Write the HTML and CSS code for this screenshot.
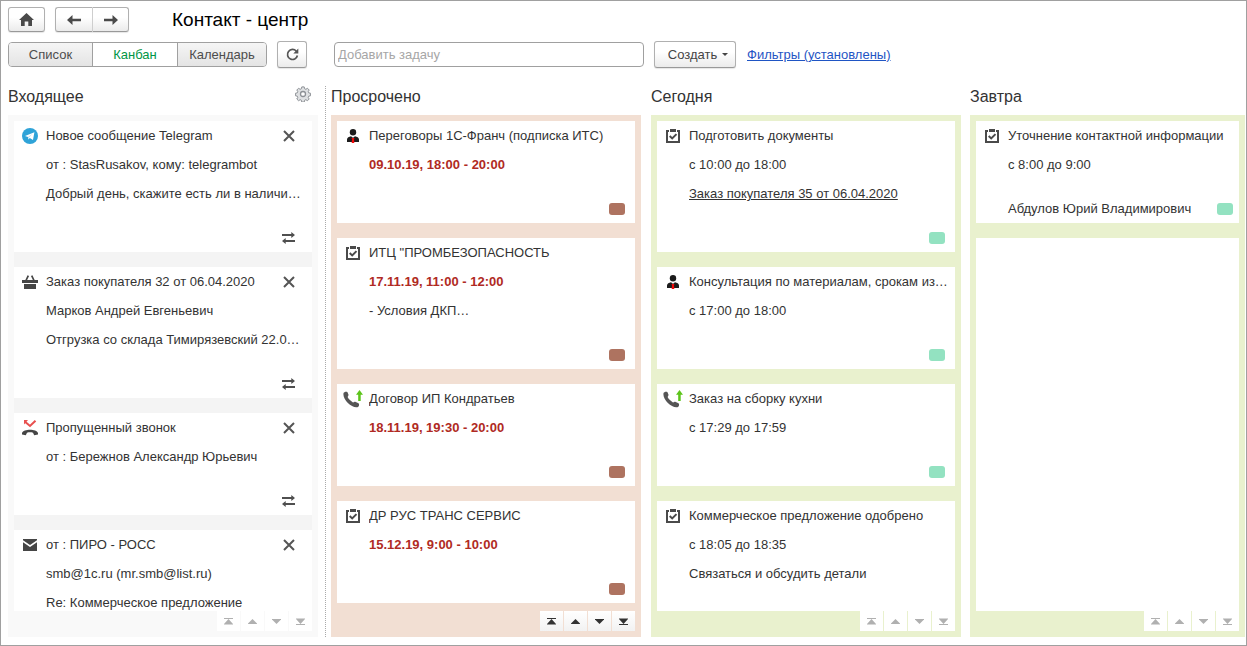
FILE: index.html
```html
<!DOCTYPE html>
<html lang="ru">
<head>
    <meta charset="UTF-8">
    <meta name="viewport" content="width=device-width, initial-scale=1.0">
    <title>Контакт - центр</title>
    <link rel="stylesheet" href="styles.css">
</head>
<body>
    <svg class="sprite" aria-hidden="true">
        <symbol id="i-home" viewBox="0 0 15 13">
            <path d="M7.500 0 15 7h-2v6H9.300V8.500H5.700V13H2V7H0z" fill="#4a4a4a"/>
        </symbol>
        <symbol id="i-left" viewBox="0 0 14 10">
            <path d="M0 5 5.500 0v3.700H14v2.600H5.500V10z" fill="#4a4a4a"/>
        </symbol>
        <symbol id="i-right" viewBox="0 0 14 10">
            <path d="M14 5 8.500 0v3.700H0v2.600h8.500V10z" fill="#4a4a4a"/>
        </symbol>
        <symbol id="i-refresh" viewBox="0 0 13 13">
            <path d="M10.300 3.200A5 5 0 1 0 11.400 7.500" fill="none" stroke="#555" stroke-width="1.700"/>
            <path d="M12.300.600v5H7.300z" fill="#555"/>
        </symbol>
        <symbol id="i-gear" viewBox="0 0 16 16">
            <g stroke="#8d9196" fill="#dfe1e3">
                <path d="M6.800.900h2.400l.500 1.900 1.100.500 1.700-1 1.700 1.700-1 1.700.500 1.100 1.900.500v2.400l-1.900.500-.500 1.100 1 1.700-1.700 1.700-1.700-1-1.100.500-.500 1.900H6.800l-.500-1.900-1.100-.500-1.700 1L1.800 13l1-1.700-.500-1.100-1.900-.500V7.300l1.900-.500.500-1.100-1-1.700 1.700-1.700 1.700 1 1.100-.500z" stroke-linejoin="round"/>
                <circle cx="8" cy="8" r="2.500" fill="#fff" stroke-width="1.300"/>
            </g>
        </symbol>
        <symbol id="i-telegram" viewBox="0 0 16 16">
            <circle cx="8" cy="8" r="8" fill="#2fa3d8"/>
            <path d="M3 8 12.400 4.200 11 12 7.800 9.900 6.400 11.500 6 9z" fill="#fff"/>
            <path d="M6 9l4.600-3.200L7 9.400l-.600 2.100z" fill="#b9dcef"/>
        </symbol>
        <symbol id="i-basket" viewBox="0 0 16 14">
            <path d="M4 5.500 6.300.700M12 5.500 9.700.700" stroke="#454545" stroke-width="1.700" fill="none"/>
            <path d="M0 5h16v3H0zM2 9h12v5H2z" fill="#454545"/>
        </symbol>
        <symbol id="i-missed" viewBox="0 0 16 16">
            <path d="M3 1.700 8 6l5.500-5.300" stroke="#e8504f" stroke-width="2" fill="none"/>
            <path d="M2 0h4L2 4.500z" fill="#e8504f"/>
            <path d="M0 13C1.500 8.600 14.500 8.600 16 13v1.500l-3.800.800-1.200-2.500c-1.700-.600-4.300-.600-6 0l-1.200 2.500-3.800-.800z" fill="#454545"/>
        </symbol>
        <symbol id="i-mail" viewBox="0 0 14 12">
            <path d="M0 0h14v1.300L7 6 0 1.300z" fill="#454545"/>
            <path d="M0 3.200 7 8l7-4.800V12H0z" fill="#454545"/>
        </symbol>
        <symbol id="i-person" viewBox="0 0 12 14">
            <ellipse cx="6" cy="3.300" rx="3.200" ry="3.300" fill="#1c1c1c"/>
            <path d="M0 13v-2.500C0 8.800 2 7.700 4 7.300l2 1.500 2-1.500c2 .400 4 1.500 4 3.200V13z" fill="#1c1c1c"/>
            <path d="M4.500 9h3l-.500 1.200.300 3.800H4.700l.300-3.800z" fill="#f00808"/>
        </symbol>
        <symbol id="i-task" viewBox="0 0 14 14">
            <path d="M3 2H1v11h12V2h-2" fill="none" stroke="#4a4a4a" stroke-width="2"/>
            <path d="M4 0h6v3H4z" fill="#4a4a4a"/>
            <path d="M3.700 7 6.200 9.400l4.300-4.300" fill="none" stroke="#4a4a4a" stroke-width="2"/>
        </symbol>
        <symbol id="i-call" viewBox="0 0 20 18">
            <path d="M.500 3.200C1 1.800 3.500 1.200 4.500 2.200l1 2.600c.100 1-.900 1.500-.900 2.300 1.200 2.300 3.200 4.200 5.400 5.300.800.100 1.200-.600 2.200-.600l3.300 1.400c1 .800.800 3.400-1 4C9 18.500-.700 9.800.500 3.200z" fill="#555"/>
            <path d="M16.500 0 20 4.700h-2.300V11h-2.500V4.700H13z" fill="#5cc41a"/>
        </symbol>
        <symbol id="i-close" viewBox="0 0 12 12">
            <path d="M1 1l10 10M11 1 1 11" stroke="#555" stroke-width="2" fill="none"/>
        </symbol>
        <symbol id="i-swap" viewBox="0 0 13 12">
            <path d="M0 3h10M3 9h10" stroke="#4f4f4f" stroke-width="2" fill="none"/>
            <path d="M9.300 0 13 3 9.300 6zM3.700 6 0 9l3.700 3z" fill="#4f4f4f"/>
        </symbol>
        <symbol id="i-top" viewBox="0 0 9 7">
            <path d="M0 0h9v1H0zM4.500 1 9 6v.500H0V6z" fill="currentColor"/>
        </symbol>
        <symbol id="i-up" viewBox="0 0 9 7">
            <path d="M4.500 1 9 5.500V6H0v-.500z" fill="currentColor"/>
        </symbol>
        <symbol id="i-down" viewBox="0 0 9 7">
            <path d="M4.500 6 9 1.500V1H0v.500z" fill="currentColor"/>
        </symbol>
        <symbol id="i-bottom" viewBox="0 0 9 7">
            <path d="M0 6h9v1H0zM4.500 6 9 1V.500H0V1z" fill="currentColor"/>
        </symbol>
    </svg>

    <header class="header">
        <button class="btn home" aria-label="Домой"><svg width="15" height="13"><use href="#i-home"/></svg></button>
        <div class="nav">
            <button class="btn" aria-label="Назад"><svg width="14" height="10"><use href="#i-left"/></svg></button>
            <button class="btn" aria-label="Вперед"><svg width="14" height="10"><use href="#i-right"/></svg></button>
        </div>
        <h1>Контакт - центр</h1>
    </header>

    <div class="toolbar">
        <div class="views">
            <button>Список</button>
            <button class="active">Канбан</button>
            <button>Календарь</button>
        </div>
        <button class="btn refresh" aria-label="Обновить"><svg width="13" height="13"><use href="#i-refresh"/></svg></button>
        <input class="add-task" type="text" placeholder="Добавить задачу" aria-label="Добавить задачу">
        <button class="btn create">Создать <span class="caret"></span></button>
        <a class="filters" href="#">Фильтры (установлены)</a>
    </div>

    <main class="board">
        <section class="column inbox">
            <div class="column-title">
                <h2>Входящее</h2>
                <button class="icon-btn" aria-label="Настройка"><svg width="16" height="16"><use href="#i-gear"/></svg></button>
            </div>
            <div class="lane">
                <div class="cards">
                    <article class="card">
                        <div class="row">
                            <span class="icon"><svg width="16" height="16"><use href="#i-telegram"/></svg></span>
                            <h3>Новое сообщение Telegram</h3>
                            <button class="icon-btn" aria-label="Закрыть"><svg width="12" height="12"><use href="#i-close"/></svg></button>
                        </div>
                        <p>от : StasRusakov, кому: telegrambot</p>
                        <p>Добрый день, скажите есть ли в наличи…</p>
                        <div class="card-foot">
                            <button class="icon-btn" aria-label="Передать"><svg width="13" height="12"><use href="#i-swap"/></svg></button>
                        </div>
                    </article>
                    <article class="card">
                        <div class="row">
                            <span class="icon"><svg width="16" height="14"><use href="#i-basket"/></svg></span>
                            <h3>Заказ покупателя 32 от 06.04.2020</h3>
                            <button class="icon-btn" aria-label="Закрыть"><svg width="12" height="12"><use href="#i-close"/></svg></button>
                        </div>
                        <p>Марков Андрей Евгеньевич</p>
                        <p>Отгрузка со склада Тимирязевский 22.0…</p>
                        <div class="card-foot">
                            <button class="icon-btn" aria-label="Передать"><svg width="13" height="12"><use href="#i-swap"/></svg></button>
                        </div>
                    </article>
                    <article class="card">
                        <div class="row">
                            <span class="icon"><svg width="16" height="16"><use href="#i-missed"/></svg></span>
                            <h3>Пропущенный звонок</h3>
                            <button class="icon-btn" aria-label="Закрыть"><svg width="12" height="12"><use href="#i-close"/></svg></button>
                        </div>
                        <p>от : Бережнов Александр Юрьевич</p>
                        <div class="card-foot">
                            <button class="icon-btn" aria-label="Передать"><svg width="13" height="12"><use href="#i-swap"/></svg></button>
                        </div>
                    </article>
                    <article class="card">
                        <div class="row">
                            <span class="icon"><svg width="14" height="12"><use href="#i-mail"/></svg></span>
                            <h3>от : ПИРО - РОСС</h3>
                            <button class="icon-btn" aria-label="Закрыть"><svg width="12" height="12"><use href="#i-close"/></svg></button>
                        </div>
                        <p>smb@1c.ru (mr.smb@list.ru)</p>
                        <p>Re: Коммерческое предложение</p>
                        <div class="card-foot"></div>
                    </article>
                </div>
                <div class="pager">
                    <button disabled aria-label="В начало"><svg width="9" height="7"><use href="#i-top"/></svg></button>
                    <button disabled aria-label="Вверх"><svg width="9" height="7"><use href="#i-up"/></svg></button>
                    <button disabled aria-label="Вниз"><svg width="9" height="7"><use href="#i-down"/></svg></button>
                    <button disabled aria-label="В конец"><svg width="9" height="7"><use href="#i-bottom"/></svg></button>
                </div>
            </div>
        </section>

        <section class="column overdue">
            <div class="column-title">
                <h2>Просрочено</h2>
            </div>
            <div class="lane">
                <div class="cards">
                    <article class="card">
                        <div class="row">
                            <span class="icon"><svg width="12" height="14"><use href="#i-person"/></svg></span>
                            <h3>Переговоры 1С-Франч (подписка ИТС)</h3>
                        </div>
                        <p class="late">09.10.19, 18:00 - 20:00</p>
                        <div class="card-foot"><span class="mark"></span></div>
                    </article>
                    <article class="card">
                        <div class="row">
                            <span class="icon"><svg width="14" height="14"><use href="#i-task"/></svg></span>
                            <h3>ИТЦ "ПРОМБЕЗОПАСНОСТЬ</h3>
                        </div>
                        <p class="late">17.11.19, 11:00 - 12:00</p>
                        <p>- Условия ДКП…</p>
                        <div class="card-foot"><span class="mark"></span></div>
                    </article>
                    <article class="card">
                        <div class="row">
                            <span class="icon"><svg width="20" height="18"><use href="#i-call"/></svg></span>
                            <h3>Договор ИП Кондратьев</h3>
                        </div>
                        <p class="late">18.11.19, 19:30 - 20:00</p>
                        <div class="card-foot"><span class="mark"></span></div>
                    </article>
                    <article class="card">
                        <div class="row">
                            <span class="icon"><svg width="14" height="14"><use href="#i-task"/></svg></span>
                            <h3>ДР РУС ТРАНС СЕРВИС</h3>
                        </div>
                        <p class="late">15.12.19, 9:00 - 10:00</p>
                        <div class="card-foot"><span class="mark"></span></div>
                    </article>
                </div>
                <div class="pager">
                    <button aria-label="В начало"><svg width="9" height="7"><use href="#i-top"/></svg></button>
                    <button aria-label="Вверх"><svg width="9" height="7"><use href="#i-up"/></svg></button>
                    <button aria-label="Вниз"><svg width="9" height="7"><use href="#i-down"/></svg></button>
                    <button aria-label="В конец"><svg width="9" height="7"><use href="#i-bottom"/></svg></button>
                </div>
            </div>
        </section>

        <section class="column today">
            <div class="column-title">
                <h2>Сегодня</h2>
            </div>
            <div class="lane">
                <div class="cards">
                    <article class="card">
                        <div class="row">
                            <span class="icon"><svg width="14" height="14"><use href="#i-task"/></svg></span>
                            <h3>Подготовить документы</h3>
                        </div>
                        <p>с 10:00 до 18:00</p>
                        <p><a href="#">Заказ покупателя 35 от 06.04.2020</a></p>
                        <div class="card-foot"><span class="mark"></span></div>
                    </article>
                    <article class="card">
                        <div class="row">
                            <span class="icon"><svg width="12" height="14"><use href="#i-person"/></svg></span>
                            <h3>Консультация по материалам, срокам из…</h3>
                        </div>
                        <p>с 17:00 до 18:00</p>
                        <div class="card-foot"><span class="mark"></span></div>
                    </article>
                    <article class="card">
                        <div class="row">
                            <span class="icon"><svg width="20" height="18"><use href="#i-call"/></svg></span>
                            <h3>Заказ на сборку кухни</h3>
                        </div>
                        <p>с 17:29 до 17:59</p>
                        <div class="card-foot"><span class="mark"></span></div>
                    </article>
                    <article class="card">
                        <div class="row">
                            <span class="icon"><svg width="14" height="14"><use href="#i-task"/></svg></span>
                            <h3>Коммерческое предложение одобрено</h3>
                        </div>
                        <p>с 18:05 до 18:35</p>
                        <p>Связаться и обсудить детали</p>
                        <div class="card-foot"></div>
                    </article>
                </div>
                <div class="pager">
                    <button disabled aria-label="В начало"><svg width="9" height="7"><use href="#i-top"/></svg></button>
                    <button disabled aria-label="Вверх"><svg width="9" height="7"><use href="#i-up"/></svg></button>
                    <button disabled aria-label="Вниз"><svg width="9" height="7"><use href="#i-down"/></svg></button>
                    <button disabled aria-label="В конец"><svg width="9" height="7"><use href="#i-bottom"/></svg></button>
                </div>
            </div>
        </section>

        <section class="column tomorrow">
            <div class="column-title">
                <h2>Завтра</h2>
            </div>
            <div class="lane">
                <div class="cards">
                    <article class="card">
                        <div class="row">
                            <span class="icon"><svg width="14" height="14"><use href="#i-task"/></svg></span>
                            <h3>Уточнение контактной информации</h3>
                        </div>
                        <p>с 8:00 до 9:00</p>
                        <div class="card-foot"><span class="person">Абдулов Юрий Владимирович</span><span class="mark"></span></div>
                    </article>
                    <div class="card empty"></div>
                </div>
                <div class="pager">
                    <button disabled aria-label="В начало"><svg width="9" height="7"><use href="#i-top"/></svg></button>
                    <button disabled aria-label="Вверх"><svg width="9" height="7"><use href="#i-up"/></svg></button>
                    <button disabled aria-label="Вниз"><svg width="9" height="7"><use href="#i-down"/></svg></button>
                    <button disabled aria-label="В конец"><svg width="9" height="7"><use href="#i-bottom"/></svg></button>
                </div>
            </div>
        </section>
    </main>
</body>
</html>
```
FILE: styles.css
```css
* {
    margin: 0;
    padding: 0;
    box-sizing: border-box;
}

body {
    display: flex;
    flex-direction: column;
    height: 100vh;
    padding: 6px 1px 8px 7px;
    border: 1px solid #a0a0a0;
    background: #fff;
    color: #333;
    font-family: "Liberation Sans", Arial, sans-serif;
    font-size: 13px;
}

button,
input {
    font: inherit;
    color: inherit;
}

button {
    cursor: pointer;
}

svg {
    display: block;
}

.sprite {
    position: absolute;
    width: 0;
    height: 0;
}

/* header */

.header {
    display: flex;
    align-items: center;
    height: 25px;
}

.header h1 {
    margin-left: 43px;
    color: #000;
    font-size: 19px;
    font-weight: normal;
}

.btn {
    display: flex;
    justify-content: center;
    align-items: center;
    width: 37px;
    height: 25px;
    border: 1px solid #b0b0b0;
    border-bottom-color: #999;
    border-radius: 3px;
    background: linear-gradient(#fff 40%, #ebebeb);
    box-shadow: 0 1px 1px rgba(0, 0, 0, 0.1);
}

.btn:hover {
    background: #f3f3f3;
}

.nav {
    display: flex;
    margin-left: 10px;
}

.nav .btn:first-child {
    width: 38px;
    border-right-color: #d0d0d0;
    border-radius: 3px 0 0 3px;
}

.nav .btn:last-child {
    width: 36px;
    border-left: none;
    border-radius: 0 3px 3px 0;
}

/* toolbar */

.toolbar {
    display: flex;
    align-items: center;
    margin: 9px 0 18px;
}

.views {
    display: flex;
    border: 1px solid #a0a0a0;
    border-radius: 4px;
    overflow: hidden;
}

.views button {
    height: 23px;
    width: 83px;
    border: none;
    background: linear-gradient(#f5f5f5, #e4e4e4);
    color: #4d4d4d;
}

.views button + button {
    width: 85px;
    border-left: 1px solid #a0a0a0;
}

.views button:last-child {
    width: 89px;
}

.views .active {
    background: #fff;
    color: #009646;
}

.refresh,
.create {
    height: 27px;
    margin-left: 10px;
}

.refresh {
    width: 30px;
}

.add-task {
    flex: 0 1 310px;
    min-width: 0;
    height: 25px;
    margin-left: 27px;
    padding: 0 3px;
    border: 1px solid #a0a0a0;
    border-radius: 4px;
}

.add-task::placeholder {
    color: #a6a6a6;
}

.create {
    width: 82px;
    gap: 5px;
    padding-left: 6px;
    color: #444;
}

.caret {
    border: 3px solid transparent;
    border-top-color: #444;
    border-bottom: none;
}

.filters {
    margin-left: 11px;
    color: #1f55c4;
}

/* board */

.board {
    display: flex;
    flex: 1;
    min-height: 0;
}

.column {
    display: flex;
    flex: 310 1 0;
    flex-direction: column;
    min-width: 0;
    margin-left: 10px;
}

.inbox {
    margin-left: 0;
    padding-right: 7px;
    border-right: 1px dotted #aaa;
}

.overdue {
    margin-left: 5px;
}

.tomorrow {
    flex-grow: 275;
    margin-left: 9px;
}

.column-title {
    display: flex;
    justify-content: space-between;
    padding: 0 7px 7px 0;
}

.column-title h2 {
    font-size: 16px;
    font-weight: normal;
    line-height: 22px;
}

.icon-btn {
    display: flex;
    border: none;
    background: none;
}

.lane {
    display: flex;
    flex: 1;
    flex-direction: column;
    min-height: 0;
    padding: 6px;
    background: #e9f1ce;
}

.inbox .lane {
    background: #f9f9f9;
}

.overdue .lane {
    background: #f2dfd3;
}

.cards {
    display: flex;
    flex: 1;
    flex-direction: column;
    gap: 15px;
    min-height: 0;
    overflow: hidden;
}

.inbox .cards {
    background: #f4f4f4;
}

.card {
    flex: none;
    background: #fff;
}

.card.empty {
    flex: 1;
}

.row {
    display: flex;
    align-items: center;
    height: 29px;
    padding-right: 4px;
}

.inbox .row {
    padding-right: 17px;
}

.icon {
    display: flex;
    flex: none;
    justify-content: center;
    width: 32px;
}

.card h3 {
    flex: 1;
    font-size: 13px;
    font-weight: normal;
}

.card h3,
.card p {
    line-height: 29px;
    white-space: nowrap;
    overflow: hidden;
    text-overflow: ellipsis;
}

.card p {
    padding: 0 4px 0 32px;
}

.card a {
    color: inherit;
}

.card .late {
    color: #b02a23;
    font-weight: bold;
}

.card-foot {
    display: flex;
    justify-content: flex-end;
    align-items: center;
    height: 44px;
    padding: 15px 10px 0 32px;
}

.inbox .card-foot {
    padding-right: 17px;
}

.person {
    flex: 1;
    white-space: nowrap;
}

.mark {
    width: 16px;
    height: 12px;
    border-radius: 3px;
    background: #93e2c1;
}

.overdue .mark {
    background: #ae7360;
}

.tomorrow .card-foot {
    padding-right: 6px;
}

/* scroll buttons under the cards */

.pager {
    display: flex;
    flex: none;
    justify-content: flex-end;
    gap: 1px;
}

.pager button {
    display: flex;
    justify-content: center;
    align-items: center;
    width: 23px;
    height: 20px;
    border: none;
    background: linear-gradient(#fff, #f2f2f2);
    color: #333;
}

.pager button:disabled {
    background: #fff;
    color: #b0b0b0;
    cursor: default;
}
```
